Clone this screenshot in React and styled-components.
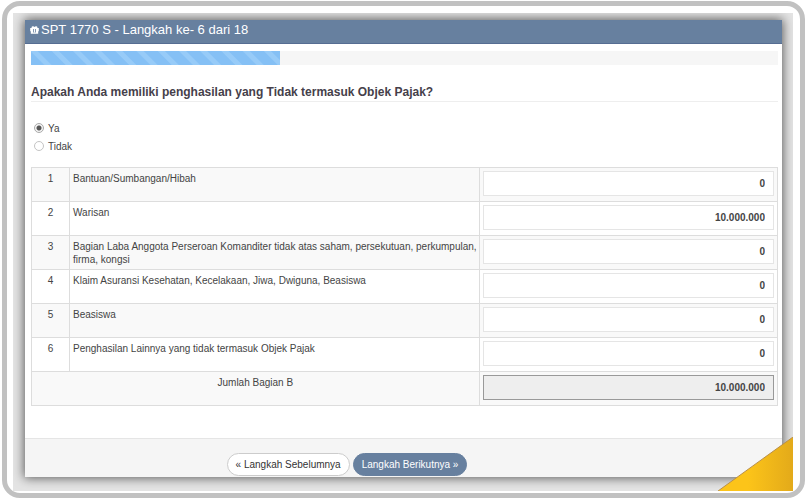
import React, { useState } from "react";
import styled, { createGlobalStyle, css } from "styled-components";

const GlobalStyle = createGlobalStyle`
  *, *::before, *::after { box-sizing: border-box; }
  body {
    margin: 0;
    background: #fff;
    color: #444;
    font-family: "Liberation Sans", Arial, sans-serif;
    font-size: 10px;
  }
`;

const Page = styled.div`
  display: flex;
  min-height: 100vh;
  padding: 1px 1px 0 2px;
`;

const Frame = styled.div`
  display: flex;
  flex: 1;
  min-width: 0;
  padding: 7px 7px 2px 6px;
  border: 5px solid #c1c1c1;
  border-radius: 18px;
`;

const Backdrop = styled.div`
  position: relative;
  display: flex;
  flex: 1;
  min-width: 0;
  padding: 7px 11px 14px 12px;
  overflow: hidden;
  background: #e4e4e4;
`;

const Panel = styled.section`
  display: flex;
  flex: 1;
  flex-direction: column;
  min-width: 0;
  background: #fff;
  box-shadow: 0 0 10px 1px rgba(0, 0, 0, 0.6);
`;

const Header = styled.header`
  display: flex;
  align-items: center;
  gap: 2px;
  height: 24px;
  padding: 0 5px 3px;
  border-bottom: 1px solid #566d92;
  background: #67809f;
  color: #fff;
`;

const Title = styled.h1`
  margin: 0;
  font-size: 13px;
  font-weight: 400;
  line-height: 16px;
`;

const Content = styled.div`
  flex: 1;
  padding: 7px 4px 0 6px;
`;

const Progress = styled.div`
  height: 14px;
  background: #f6f6f6;
`;

const ProgressBar = styled.div`
  height: 100%;
  background: repeating-linear-gradient(
    45deg,
    #85c0f5 0 9px,
    #97cbf8 10px 14px,
    #85c0f5 15px
  );
`;

const Question = styled.h2`
  margin: 20px 0 0;
  padding-bottom: 1px;
  border-bottom: 1px solid #eee;
  color: #45404a;
  font-size: 12px;
  line-height: 15px;
`;

const Choices = styled.fieldset`
  display: flex;
  flex-direction: column;
  margin: 17px 0 12px;
  padding: 0 0 0 3px;
  border: 0;
`;

const Choice = styled.label`
  display: flex;
  align-items: center;
  gap: 4px;
  height: 18px;
`;

const Radio = styled.input`
  appearance: none;
  width: 10px;
  height: 10px;
  margin: 0;
  border: 1px solid #c4c4c4;
  border-radius: 50%;
  background: #fff;

  &:checked {
    border-color: #aaa;
    background: radial-gradient(circle, #555 0 2px, #f4f4f4 3px);
  }
`;

const Table = styled.table`
  width: 100%;
  border-collapse: collapse;
  table-layout: fixed;
`;

const NumberCol = styled.col`
  width: 38px;
`;

const ValueCol = styled.col`
  width: 40%;
`;

const Row = styled.tr`
  height: 34px;

  &:nth-child(odd) {
    background: #f9f9f9;
  }
`;

const Cell = styled.td`
  padding: 4px 0 3px 3px;
  border: 1px solid #ddd;
  line-height: 13px;
  vertical-align: top;
`;

const CenterCell = styled(Cell)`
  padding: 4px 3px 3px;
  text-align: center;
`;

const ValueCell = styled(Cell)`
  padding: 3px 3px 5px;
`;

const Amount = styled.input`
  display: block;
  width: 100%;
  height: 25px;
  padding: 0 8px;
  border: 1px solid #e5e5e5;
  border-radius: 0;
  outline: 0;
  background: #fff;
  color: #444;
  font: bold 10px "Liberation Sans", Arial, sans-serif;
  text-align: right;

  ${({ readOnly }) =>
    readOnly &&
    css`
      border-color: #999;
      background: #eee;
    `}
`;

const Footer = styled.footer`
  display: flex;
  justify-content: center;
  gap: 3px;
  padding: 14px 113px 1px 0;
  border-top: 1px solid #e5e5e5;
  background: #f5f5f5;
`;

const Button = styled.button`
  height: 23px;
  padding: 0 8px;
  border: 1px solid ${({ $primary }) => ($primary ? "#67809f" : "#ccc")};
  border-radius: 12px;
  background: ${({ $primary }) => ($primary ? "#67809f" : "#fff")};
  color: ${({ $primary }) => ($primary ? "#fff" : "#333")};
  font: 10px "Liberation Sans", Arial, sans-serif;
  white-space: nowrap;
`;

const Corner = styled.svg`
  position: absolute;
  right: 0;
  bottom: 0;
`;

const ITEMS = [
  ["Bantuan/Sumbangan/Hibah", "0"],
  ["Warisan", "10.000.000"],
  [
    "Bagian Laba Anggota Perseroan Komanditer tidak atas saham, persekutuan, perkumpulan, firma, kongsi",
    "0",
  ],
  ["Klaim Asuransi Kesehatan, Kecelakaan, Jiwa, Dwiguna, Beasiswa", "0"],
  ["Beasiswa", "0"],
  ["Penghasilan Lainnya yang tidak termasuk Objek Pajak", "0"],
];

const STEP = 6;
const STEP_COUNT = 18;

function GiftIcon() {
  return (
    <svg width="9" height="8" viewBox="0 0 9 8" aria-hidden="true">
      <path
        fill="#fff"
        fillRule="evenodd"
        d="M2.2 0.4C3.2 0 4 0.4 4.5 1.1C5 0.4 5.8 0 6.8 0.4C7.6 0.8 7.6 1.6 7.2 2.1H8.8V5.2H8.2V7.8H0.8V5.2H0.2V2.1H1.8C1.4 1.6 1.4 0.8 2.2 0.4ZM3.2 3H5.8V6.4H3.2Z"
      />
      <path fill="#fff" d="M4 3h1v3.4h-1z" />
    </svg>
  );
}

export default function App() {
  const [answer, setAnswer] = useState("ya");
  const [amounts, setAmounts] = useState(ITEMS.map(([, value]) => value));

  const changeAmount = (index, value) =>
    setAmounts(amounts.map((old, i) => (i === index ? value : old)));

  const total = amounts
    .reduce((sum, value) => sum + Number(value.replace(/\D/g, "")), 0)
    .toLocaleString("de-DE");

  return (
    <Page>
      <GlobalStyle />
      <Frame>
        <Backdrop>
          <Panel>
            <Header>
              <GiftIcon />
              <Title>
                SPT 1770 S - Langkah ke- {STEP} dari {STEP_COUNT}
              </Title>
            </Header>
            <Content>
              <Progress
                role="progressbar"
                aria-label="Langkah"
                aria-valuenow={STEP}
                aria-valuemin={0}
                aria-valuemax={STEP_COUNT}
              >
                <ProgressBar style={{ width: `${(STEP / STEP_COUNT) * 100}%` }} />
              </Progress>
              <Question id="question">
                Apakah Anda memiliki penghasilan yang Tidak termasuk Objek Pajak?
              </Question>
              <Choices aria-labelledby="question">
                {[
                  ["ya", "Ya"],
                  ["tidak", "Tidak"],
                ].map(([value, label]) => (
                  <Choice key={value}>
                    <Radio
                      type="radio"
                      name="answer"
                      value={value}
                      checked={answer === value}
                      onChange={() => setAnswer(value)}
                    />
                    {label}
                  </Choice>
                ))}
              </Choices>
              <Table>
                <colgroup>
                  <NumberCol />
                  <col />
                  <ValueCol />
                </colgroup>
                <tbody>
                  {ITEMS.map(([name], index) => (
                    <Row key={name}>
                      <CenterCell>{index + 1}</CenterCell>
                      <Cell>
                        <label htmlFor={`amount-${index}`}>{name}</label>
                      </Cell>
                      <ValueCell>
                        <Amount
                          id={`amount-${index}`}
                          value={amounts[index]}
                          onChange={(e) => changeAmount(index, e.target.value)}
                        />
                      </ValueCell>
                    </Row>
                  ))}
                  <Row>
                    <CenterCell colSpan={2}>
                      <label htmlFor="total">Jumlah Bagian B</label>
                    </CenterCell>
                    <ValueCell>
                      <Amount id="total" value={total} readOnly />
                    </ValueCell>
                  </Row>
                </tbody>
              </Table>
            </Content>
            <Footer>
              <Button type="button">« Langkah Sebelumnya</Button>
              <Button type="button" $primary>
                Langkah Berikutnya »
              </Button>
            </Footer>
          </Panel>
          <Corner width="75" height="54" viewBox="0 0 75 54" aria-hidden="true">
            <defs>
              <linearGradient id="gold" x1="0" x2="1" y1="0" y2="0">
                <stop offset="0.4" stopColor="#fcc419" />
                <stop offset="1" stopColor="#e3aa1a" />
              </linearGradient>
            </defs>
            <path d="M0 54L75 0V54Z" fill="url(#gold)" />
            <path d="M0 54L75 0" stroke="#b98f4a" fill="none" />
          </Corner>
        </Backdrop>
      </Frame>
    </Page>
  );
}
